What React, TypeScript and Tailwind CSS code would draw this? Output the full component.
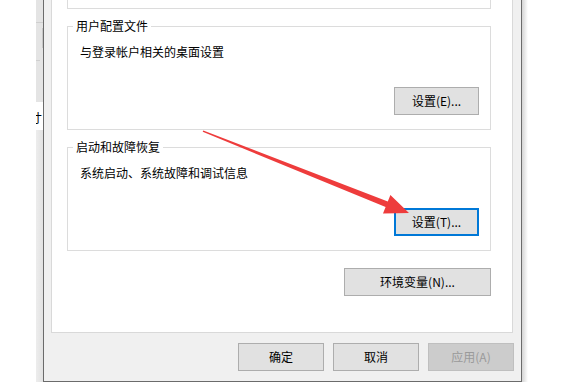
import React from 'react'

const FONT = "font-['Microsoft_YaHei_UI','Noto_Sans_CJK_SC',sans-serif]"

function WinButton({ label, focused, disabled, className = '' }: { label: string; focused?: boolean; disabled?: boolean; className?: string }) {
  let look = 'border border-[#adadad] bg-[#e1e1e1] text-black'
  if (focused) look = 'border-2 border-[#0078d7] bg-[#e1e1e1] text-black'
  if (disabled) look = 'border border-[#bfbfbf] bg-[#cccccc] text-[#9a9a9a]'
  return (
    <div className={`flex h-[28px] items-center justify-center text-[12px] leading-[16px] ${look} ${className}`}>
      {label}
    </div>
  )
}

function GroupBox({ title, desc, button, focused }: { title: string; desc: string; button: string; focused?: boolean }) {
  return (
    <div className="relative mt-[17px] h-[104px] border border-[#dcdcdc]">
      <span className="absolute -top-[9px] left-[5px] bg-white px-[3px] text-[12px] leading-[16px] text-black">{title}</span>
      <div className="pl-[12px] pt-[17px] text-[12px] leading-[16px] text-black">{desc}</div>
      <div className="mt-[27px] flex justify-end pr-[11px]">
        <WinButton label={button} focused={focused} className="w-[85px]" />
      </div>
    </div>
  )
}

export default function App() {
  return (
    <div className={`relative h-[382px] w-[572px] overflow-hidden bg-white ${FONT}`}>
      <div className="flex h-full">
        <div className="w-[36px] shrink-0" />

        {/* edge of the window behind */}
        <div className="flex w-[7px] shrink-0 flex-col overflow-hidden">
          <div className="h-[102px] bg-[#e4e4e4]">
            <div className="mt-[22px] h-px bg-[#cfcfcf]" />
            <div className="mt-[5px] h-[20px] border-r border-[#c8c8c8]" />
            <div className="mt-[12px] h-px w-[4px] bg-[#cfcfcf]" />
          </div>
          <div className="h-[28px] bg-white">
            <span className="ml-[-6px] block pt-[8px] text-[12px] leading-[16px] text-black">寸</span>
          </div>
          <div className="flex-1 bg-gradient-to-r from-[#ededed] to-[#e2e2e2]" />
        </div>

        {/* dialog */}
        <div className="flex h-[382px] w-[479px] shrink-0 flex-col border-x border-b border-[#6b6b6b] bg-[#f0f0f0]">
          <div className="ml-[7px] h-[333px] w-[462px] border-x border-b border-[#d9d9d9] bg-white pl-[15px] pr-[21px]">
            <div className="h-[9px] border-x border-b border-[#dcdcdc]" />
            <GroupBox title="用户配置文件" desc="与登录帐户相关的桌面设置" button="设置(E)..." />
            <GroupBox title="启动和故障恢复" desc="系统启动、系统故障和调试信息" button="设置(T)..." focused />
            <div className="mt-[17px] flex justify-end">
              <WinButton label="环境变量(N)..." className="w-[147px]" />
            </div>
          </div>
          <div className="flex justify-end gap-[9px] pr-[7px] pt-[10px]">
            <WinButton label="确定" className="w-[86px]" />
            <WinButton label="取消" className="w-[86px]" />
            <WinButton label="应用(A)" disabled className="w-[86px]" />
          </div>
        </div>

        <div className="w-[6px] shrink-0 bg-gradient-to-r from-[#d4d4d4] to-white" />
      </div>

      {/* red annotation arrow */}
      <svg className="pointer-events-none absolute left-0 top-0" width="572" height="382" viewBox="0 0 572 382">
        <polygon
          points="203.3,130.4 387.8,201.4 390.4,194.9 409,213 383,213.5 385.6,207 202.7,131.8"
          fill="#ee3c3c"
        />
      </svg>
    </div>
  )
}
